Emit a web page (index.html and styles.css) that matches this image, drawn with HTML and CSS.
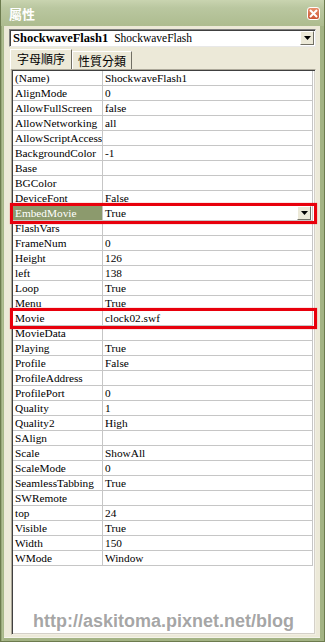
FILE: index.html
```html
<!DOCTYPE html>
<html>
<head>
<meta charset="utf-8">
<link rel="stylesheet" href="styles.css">
</head>
<body>
<div class="window">
  <div class="titlebar">
    <span class="title">屬性</span>
    <span class="close"><svg width="9" height="9" viewBox="0 0 9 9"><path d="M1 1 L8 8 M8 1 L1 8" stroke="#fff" stroke-width="2"/></svg></span>
  </div>
  <div class="face">
    <div class="combo">
      <span class="obj">ShockwaveFlash1</span><span class="cls">ShockwaveFlash</span>
      <span class="dd"><svg width="7" height="4" viewBox="0 0 7 4"><path d="M0 0 H7 L3.5 4 Z" fill="#000"/></svg></span>
    </div>
    <div class="tabs">
      <span class="tab active">字母順序</span><span class="tab">性質分類</span>
    </div>
    <div class="panel">
      <div class="grid">
        <div class="row"><span class="k">(Name)</span><span class="v">ShockwaveFlash1</span></div>
        <div class="row"><span class="k">AlignMode</span><span class="v">0</span></div>
        <div class="row"><span class="k">AllowFullScreen</span><span class="v">false</span></div>
        <div class="row"><span class="k">AllowNetworking</span><span class="v">all</span></div>
        <div class="row"><span class="k">AllowScriptAccess</span><span class="v"></span></div>
        <div class="row"><span class="k">BackgroundColor</span><span class="v">-1</span></div>
        <div class="row"><span class="k">Base</span><span class="v"></span></div>
        <div class="row"><span class="k">BGColor</span><span class="v"></span></div>
        <div class="row"><span class="k">DeviceFont</span><span class="v">False</span></div>
        <div class="row sel"><span class="k">EmbedMovie</span><span class="v">True<span class="cell-dd"><svg width="7" height="4" viewBox="0 0 7 4"><path d="M0 0 H7 L3.5 4 Z" fill="#000"/></svg></span></span></div>
        <div class="row"><span class="k">FlashVars</span><span class="v"></span></div>
        <div class="row"><span class="k">FrameNum</span><span class="v">0</span></div>
        <div class="row"><span class="k">Height</span><span class="v">126</span></div>
        <div class="row"><span class="k">left</span><span class="v">138</span></div>
        <div class="row"><span class="k">Loop</span><span class="v">True</span></div>
        <div class="row"><span class="k">Menu</span><span class="v">True</span></div>
        <div class="row"><span class="k">Movie</span><span class="v">clock02.swf</span></div>
        <div class="row"><span class="k">MovieData</span><span class="v"></span></div>
        <div class="row"><span class="k">Playing</span><span class="v">True</span></div>
        <div class="row"><span class="k">Profile</span><span class="v">False</span></div>
        <div class="row"><span class="k">ProfileAddress</span><span class="v"></span></div>
        <div class="row"><span class="k">ProfilePort</span><span class="v">0</span></div>
        <div class="row"><span class="k">Quality</span><span class="v">1</span></div>
        <div class="row"><span class="k">Quality2</span><span class="v">High</span></div>
        <div class="row"><span class="k">SAlign</span><span class="v"></span></div>
        <div class="row"><span class="k">Scale</span><span class="v">ShowAll</span></div>
        <div class="row"><span class="k">ScaleMode</span><span class="v">0</span></div>
        <div class="row"><span class="k">SeamlessTabbing</span><span class="v">True</span></div>
        <div class="row"><span class="k">SWRemote</span><span class="v"></span></div>
        <div class="row"><span class="k">top</span><span class="v">24</span></div>
        <div class="row"><span class="k">Visible</span><span class="v">True</span></div>
        <div class="row"><span class="k">Width</span><span class="v">150</span></div>
        <div class="row"><span class="k">WMode</span><span class="v">Window</span></div>
      </div>
    </div>
  </div>
  <div class="mark mark-embed"></div>
  <div class="mark mark-movie"></div>
  <div class="watermark">http://askitoma.pixnet.net/blog</div>
</div>
</body>
</html>
```

FILE: styles.css
```css
html, body { margin: 0; padding: 0; }
body { width: 325px; height: 642px; overflow: hidden; background: #a5b586; }

.window {
  position: relative;
  width: 325px;
  height: 642px;
  box-sizing: border-box;
  display: flex;
  flex-direction: column;
  background: linear-gradient(90deg, #7d8d5e 0, #b4c397 1px, #a3b384 3px, #a3b384 100%);
  border: 1px solid #6c7b4e;
  border-top: none;
}

.titlebar {
  height: 26px;
  flex: none;
  display: flex;
  align-items: center;
  justify-content: space-between;
  padding: 0 4px 0 8px;
  background: linear-gradient(180deg, #c9d4b0 0, #bac7a0 30%, #adbc8f 100%);
}
.title {
  color: #fff;
  font-family: "Noto Sans CJK TC", sans-serif;
  font-weight: bold;
  font-size: 13px;
  line-height: 14px;
  margin-top: 2px;
}
.close {
  width: 13px;
  height: 13px;
  box-sizing: border-box;
  border: 1px solid #fff;
  border-radius: 3px;
  background: linear-gradient(180deg, #e8906c, #cc5433);
  display: flex;
  align-items: center;
  justify-content: center;
  margin-top: 1px;
}
.close svg { display: block; }

.face {
  flex: 1;
  margin: 0 4px 3px 3px;
  background: #ece9d8;
  display: flex;
  flex-direction: column;
  padding: 3px 4px 2px 5px;
  border-bottom: 1px solid #f4f3ea;
}

.combo {
  height: 18px;
  box-sizing: border-box;
  background: #fff;
  border-top: 1px solid #808080;
  border-left: 1px solid #808080;
  border-right: 1px solid #e8e8e8;
  border-bottom: 1px solid #e8e8e8;
  box-shadow: inset 1px 1px 0 #404040;
  display: flex;
  align-items: center;
  font-family: "Liberation Serif", serif;
  font-size: 11.5px;
  color: #000;
  padding-left: 3px;
  position: relative;
}
.obj { font-weight: bold; font-size: 12.5px; margin-right: 6px; }
.cls { flex: 1; }
.dd {
  width: 14px;
  height: 14px;
  margin-right: 1px;
  box-sizing: border-box;
  background: #ece9d8;
  border: 1px solid #fff;
  border-right-color: #716f64;
  border-bottom-color: #716f64;
  display: flex;
  align-items: center;
  justify-content: center;
}
.dd svg { display: block; }

.tabs {
  display: flex;
  align-items: flex-end;
  margin-top: 3px;
  margin-left: 1px;
  height: 19px;
  flex: none;
}
.tab {
  font-family: "Noto Sans CJK TC", sans-serif;
  font-size: 12px;
  line-height: 15px;
  color: #000;
  padding: 1px 5px 0 5px;
  height: 16px;
  border-top: 1px solid #fff;
  border-left: 1px solid #fff;
  border-right: 1px solid #716f64;
  background: #ece9d8;
}
.tab.active {
  height: 18px;
  padding: 1px 6px 0 6px;
  line-height: 16px;
}

.panel {
  flex: 1;
  margin-left: 1px;
  margin-right: 0;
  padding: 0 0 0 1px;
  display: flex;
  flex-direction: column;
}

.grid {
  flex: 1;
  background: #fff;
  border-top: 1px solid #aca899;
  border-left: 1px solid #aca899;
  border-right: 1px solid #f1efe2;
  border-bottom: 1px solid #f1efe2;
  box-shadow: inset 1px 1px 0 #404040, inset -1px -1px 0 #d4d0c8;
  padding: 1px 2px 0 1px;
  font-family: "Liberation Serif", serif;
  font-size: 11.3px;
  color: #000;
}

.row {
  display: flex;
  height: 15px;
  box-sizing: border-box;
  border-bottom: 1px solid #c6c6c6;
  border-right: 1px solid #c6c6c6;
  line-height: 14px;
}
.k {
  width: 90px;
  flex: none;
  padding-left: 2px;
  box-sizing: border-box;
  border-right: 1px solid #c6c6c6;
  white-space: nowrap;
  overflow: hidden;
}
.v {
  flex: 1;
  padding-left: 2px;
  display: flex;
  align-items: center;
  white-space: nowrap;
}
.sel .k { background: #8c9a6d; color: #fff; }
.cell-dd {
  margin-left: auto;
  width: 14px;
  height: 14px;
  box-sizing: border-box;
  background: #ece9d8;
  border: 1px solid #fff;
  border-right-color: #716f64;
  border-bottom-color: #716f64;
  display: flex;
  align-items: center;
  justify-content: center;
  margin-right: 1px;
}
.cell-dd svg { display: block; }

.mark {
  position: absolute;
  left: 9px;
  width: 307px;
  height: 21px;
  box-sizing: border-box;
  border: 3px solid #e8000c;
  box-shadow: 0 0 1px rgba(232, 0, 12, 0.6);
}
.mark-embed { top: 203px; }
.mark-movie { top: 308px; }

.watermark {
  position: absolute;
  left: 32px;
  top: 612px;
  font-family: "Liberation Sans", sans-serif;
  font-weight: bold;
  font-size: 18px;
  line-height: 18px;
  color: rgba(150, 150, 150, 0.85);
  white-space: nowrap;
}
```
